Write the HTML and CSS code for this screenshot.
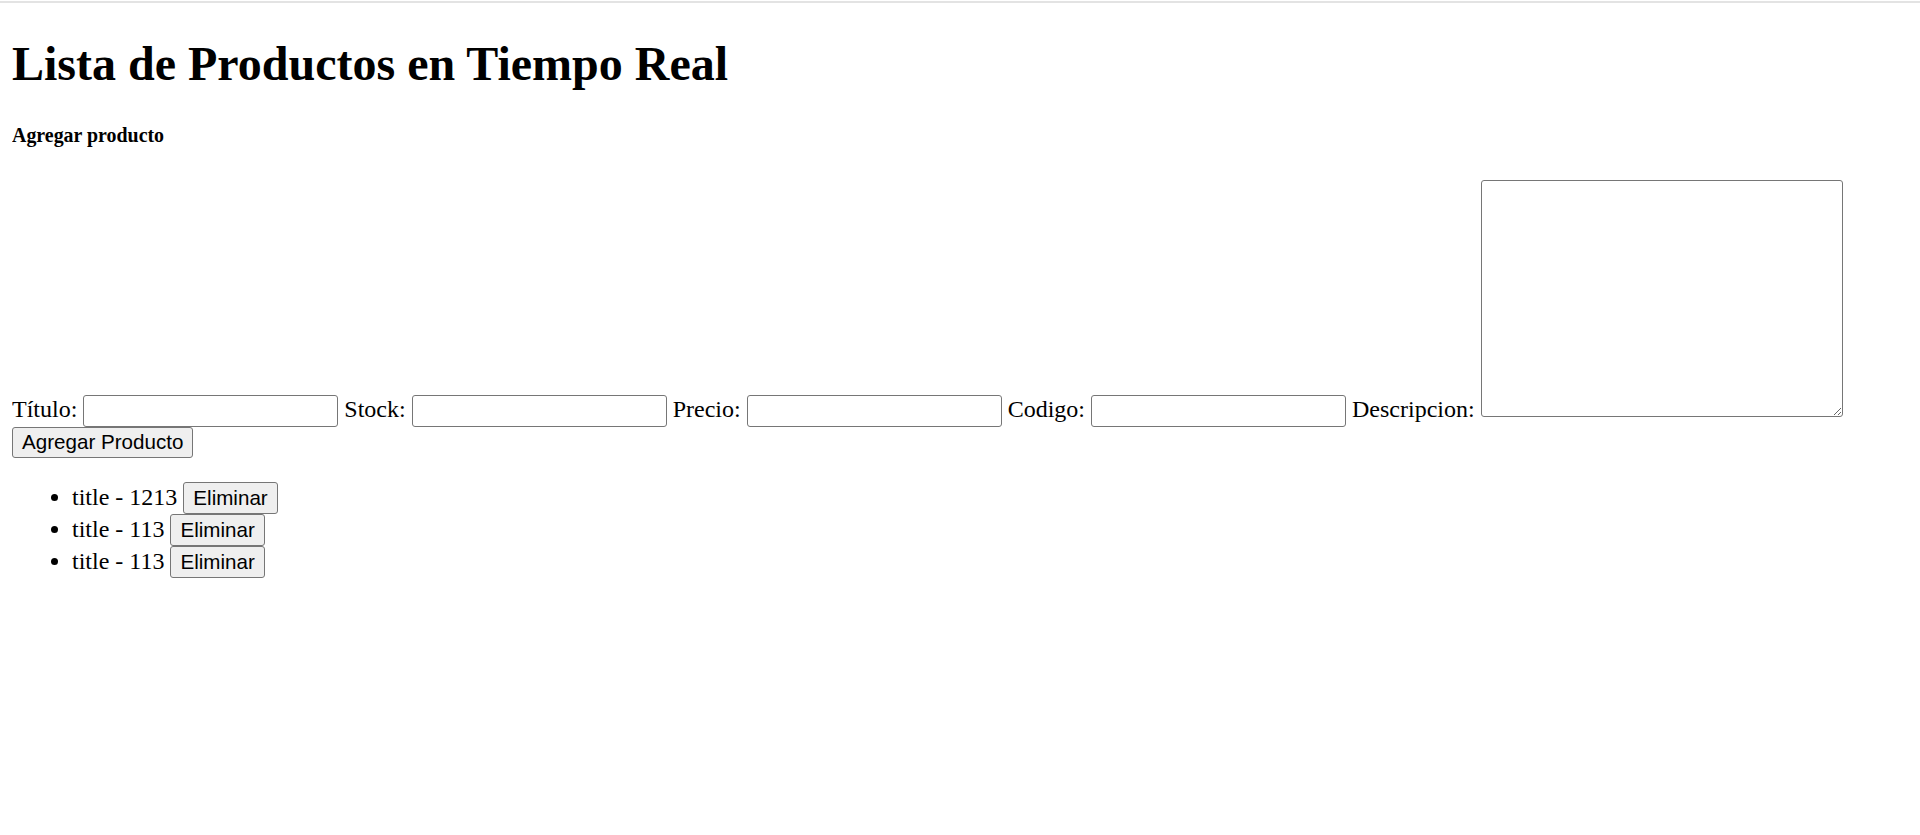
FILE: index.html
```html
<!DOCTYPE html>
<html lang="es">
<head>
<meta charset="utf-8">
<title>Productos en Tiempo Real</title>
<link rel="stylesheet" href="styles.css">
</head>
<body>
<h1 class="page-title">Lista de Productos en Tiempo Real</h1>
<h5 class="section-title">Agregar producto</h5>
<form class="product-form">
  <div class="form-line">
    <label class="form-label" for="title">Título:</label>
    <input class="text-input" type="text" id="title">
    <label class="form-label" for="stock">Stock:</label>
    <input class="text-input" type="text" id="stock">
    <label class="form-label" for="price">Precio:</label>
    <input class="text-input" type="text" id="price">
    <label class="form-label" for="code">Codigo:</label>
    <input class="text-input" type="text" id="code">
    <label class="form-label" for="desc">Descripcion:</label>
    <textarea class="desc-input" id="desc"></textarea>
  </div>
  <div class="form-actions">
    <button class="btn" type="button">Agregar Producto</button>
  </div>
</form>
<ul class="product-list">
  <li class="product-item">title - 1213 <button class="btn" type="button">Eliminar</button></li>
  <li class="product-item">title - 113 <button class="btn" type="button">Eliminar</button></li>
  <li class="product-item">title - 113 <button class="btn" type="button">Eliminar</button></li>
</ul>
</body>
</html>
```
FILE: styles.css
```css
html {
  background: #fff linear-gradient(to bottom, #fff 0, #fff 1px, #e3e3e3 1px, #e3e3e3 3px, #fff 3px) no-repeat;
  background-size: 100% 3px;
}

body {
  margin: 12px;
  font-family: "Liberation Serif", "Times New Roman", serif;
  font-size: 24px;
  color: #000;
}

.page-title {
  font-size: 48px;
  font-weight: bold;
  margin: 24px 0 32px;
}

.section-title {
  font-size: 19.92px;
  font-weight: bold;
  margin: 33.2px 0;
}

.product-form {
  margin: 0;
}

.text-input {
  box-sizing: border-box;
  width: 255px;
  height: 31.5px;
  margin: 0;
  padding: 1.5px 3px;
  border: 1px solid #767676;
  border-radius: 3px;
  font-family: "Liberation Sans", Arial, sans-serif;
  font-size: 20px;
  background: #fff;
}

.desc-input {
  box-sizing: border-box;
  width: 362px;
  height: 237px;
  margin: 0;
  padding: 3px;
  border: 1px solid #767676;
  border-radius: 3px;
  font-family: "Liberation Mono", monospace;
  font-size: 20px;
  background: #fff;
}

.btn {
  box-sizing: border-box;
  height: 31.5px;
  margin: 0;
  padding: 1.5px 9px;
  border: 1px solid #767676;
  border-radius: 3px;
  background: #efefef;
  color: #000;
  font-family: "Liberation Sans", Arial, sans-serif;
  font-size: 20.6px;
}

.product-list {
  margin: 24px 0;
  padding-left: 60px;
}

.product-item {
  height: 32px;
}
```
